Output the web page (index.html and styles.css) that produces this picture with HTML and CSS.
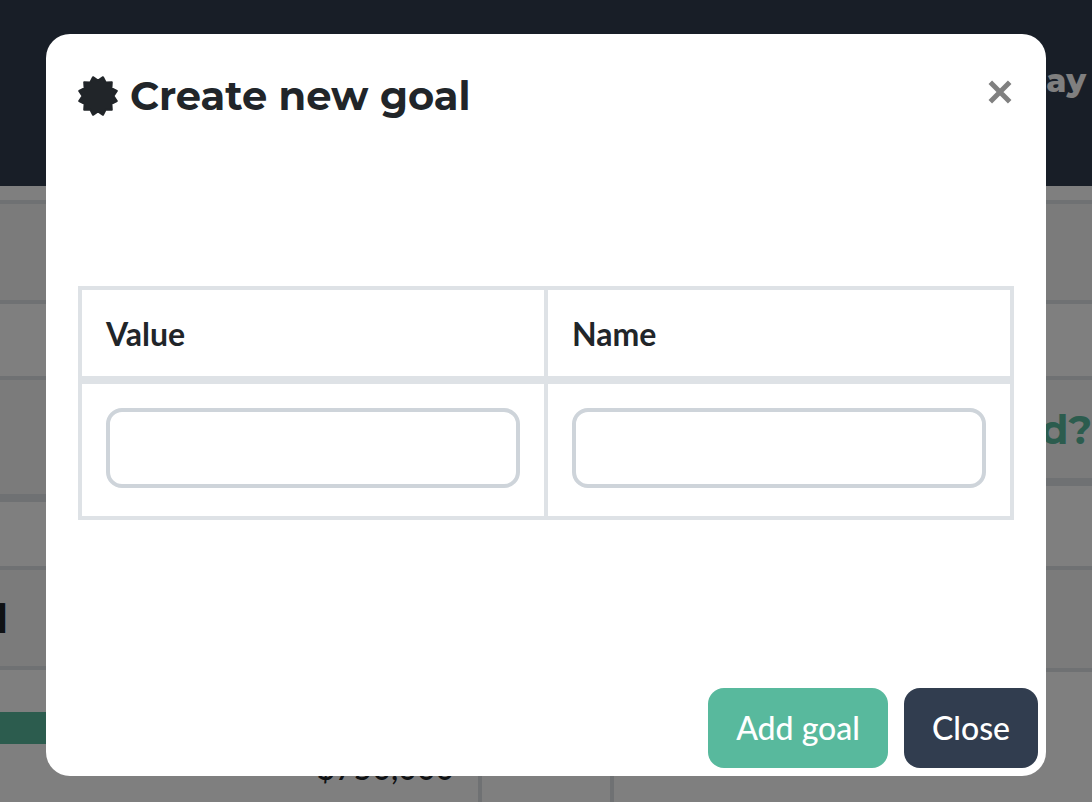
FILE: index.html
```html
<!DOCTYPE html>
<html lang="en">
<head>
  <meta charset="UTF-8">
  <title>Goals</title>
  <meta name="viewport" content="width=device-width, initial-scale=1.0">
  <link rel="stylesheet" href="styles.css">
</head>
<body>

  <header class="topbar">
    <a href="#today">Today</a>
  </header>

  <main class="page">
    <table class="list goals">
      <tr class="stripe tall"><td></td></tr>
      <tr class="short"><td></td></tr>
      <tr class="stripe head"><td></td></tr>
      <tr class="row"><td></td></tr>
      <tr class="stripe tall"><td class="title">l</td></tr>
      <tr class="total">
        <td>
          <div class="bar"></div>
          <div class="amount">$750,000</div>
        </td>
      </tr>
    </table>

    <table class="list plan">
      <tr class="stripe tall"><td></td></tr>
      <tr class="short"><td></td></tr>
      <tr class="stripe head"><td class="question">d?</td></tr>
      <tr class="row"><td></td></tr>
      <tr class="stripe tall"><td></td></tr>
      <tr class="total"><td></td></tr>
    </table>
  </main>

  <div class="backdrop">
    <form class="modal" role="dialog" aria-labelledby="modal-title">
      <div class="modal-header">
        <h2 id="modal-title">
          <svg class="badge" viewBox="-20 -20 40 40" aria-hidden="true">
            <path d="M0-15.5 5-18.8 7.8-13.4 13.8-13.8 13.4-7.8 18.8-5 15.5 0 18.8 5 13.4 7.8 13.8 13.8 7.8 13.4 5 18.8 0 15.5-5 18.8-7.8 13.4-13.8 13.8-13.4 7.8-18.8 5-15.5 0-18.8-5-13.4-7.8-13.8-13.8-7.8-13.4-5-18.8Z"/>
          </svg>
          Create new goal
        </h2>
        <button type="button" class="close" aria-label="Close dialog">
          <svg viewBox="0 0 24 24" aria-hidden="true">
            <path d="M2.3 2.3 21.7 21.7M21.7 2.3 2.3 21.7"/>
          </svg>
        </button>
      </div>

      <div class="modal-body">
        <table class="fields">
          <thead>
            <tr>
              <th><label for="value">Value</label></th>
              <th><label for="name">Name</label></th>
            </tr>
          </thead>
          <tbody>
            <tr>
              <td><input type="text" id="value"></td>
              <td><input type="text" id="name"></td>
            </tr>
          </tbody>
        </table>
      </div>

      <div class="modal-footer">
        <button type="submit" class="btn add">Add goal</button>
        <button type="button" class="btn dark">Close</button>
      </div>
    </form>
  </div>

</body>
</html>
```

FILE: styles.css
```css
* {
  box-sizing: border-box;
}

body {
  margin: 0;
  height: 100vh;
  overflow: hidden;
  background: #ffffff;
  color: #212529;
  font-family: Lato, sans-serif;
  font-size: 32px;
}

/* page behind the dialog */
.topbar {
  height: 186px;
  padding: 60px 6px;
  background: #313d4f;
  text-align: right;
}

.topbar a {
  color: #ffffff;
  font-family: Montserrat, Inter, sans-serif;
  font-size: 32px;
  font-weight: 800;
  line-height: 40px;
  text-decoration: none;
}

.page {
  display: flex;
  align-items: flex-start;
  justify-content: space-between;
  gap: 128px;
  padding-top: 14px;
}

.list {
  border-spacing: 0;
  border-top: 4px solid #dee2e6;
  table-layout: fixed;
}

.goals {
  width: 482px;
  border-right: 4px solid #dee2e6;
}

.plan {
  flex: 1;
  border-left: 4px solid #dee2e6;
}

.list td {
  padding: 0;
  border-bottom: 4px solid #dee2e6;
}

.stripe td {
  background: #f6f6f6;
}

.list .tall td {
  height: 100px;
}

.plan .row + .tall td {
  height: 102px;
}

.short td {
  height: 76px;
}

.list .head td {
  height: 106px;
  border-bottom-width: 8px;
}

.goals .head td {
  height: 122px;
}

.row td {
  height: 84px;
}

.goals .row td {
  height: 68px;
}

.total td {
  height: 136px;
  vertical-align: top;
}

.title,
.question {
  font-family: Montserrat, Inter, sans-serif;
  font-size: 40px;
  font-weight: 700;
}

.title {
  text-indent: -4px;
}

.question {
  color: #58b99d;
  text-align: right;
}

.bar {
  height: 32px;
  margin-top: 42px;
  background: #58b99d;
}

.amount {
  padding-right: 24px;
  font-weight: 500;
  line-height: 48px;
  text-align: right;
}

/* dialog */
.backdrop {
  position: fixed;
  inset: 0;
  padding: 34px 16px;
  background: rgba(0, 0, 0, 0.5);
}

.modal {
  max-width: 1000px;
  margin: 0 auto;
  background: #ffffff;
  border-radius: 24px;
}

.modal-header {
  display: flex;
  align-items: flex-start;
  justify-content: space-between;
  padding: 32px;
}

.modal-header h2 {
  display: flex;
  align-items: center;
  gap: 12px;
  margin: 0;
  font-family: Montserrat, Inter, sans-serif;
  font-size: 40px;
  font-weight: 700;
  line-height: 60px;
}

.badge {
  width: 40px;
  height: 40px;
  fill: #212529;
  stroke: #212529;
  stroke-width: 2;
  stroke-linejoin: round;
}

.close {
  padding: 14px 2px;
  border: none;
  background: none;
  cursor: pointer;
}

.close svg {
  display: block;
  width: 24px;
  height: 24px;
  stroke: #808080;
  stroke-width: 5;
}

.modal-body {
  padding: 128px 32px 160px;
}

.fields {
  width: 100%;
  border-collapse: collapse;
  table-layout: fixed;
}

.fields th,
.fields td {
  padding: 24px;
  border: 4px solid #dee2e6;
  text-align: left;
}

.fields th {
  padding-bottom: 22px;
  border-bottom-width: 8px;
  font-weight: 700;
  line-height: 40px;
}

.fields td {
  padding-bottom: 28px;
}

.fields input {
  display: block;
  width: 100%;
  height: 80px;
  padding: 12px 24px;
  border: 4px solid #ced4da;
  border-radius: 16px;
  background: #ffffff;
  color: #495057;
  font: inherit;
}

.modal-footer {
  display: flex;
  justify-content: flex-end;
  gap: 16px;
  padding: 8px;
}

.btn {
  height: 80px;
  padding: 0 28px 2px;
  border: none;
  border-radius: 16px;
  color: #ffffff;
  font: inherit;
  font-weight: 500;
  cursor: pointer;
}

.add {
  background: #58b99d;
}

.dark {
  background: #313d4f;
}
```
